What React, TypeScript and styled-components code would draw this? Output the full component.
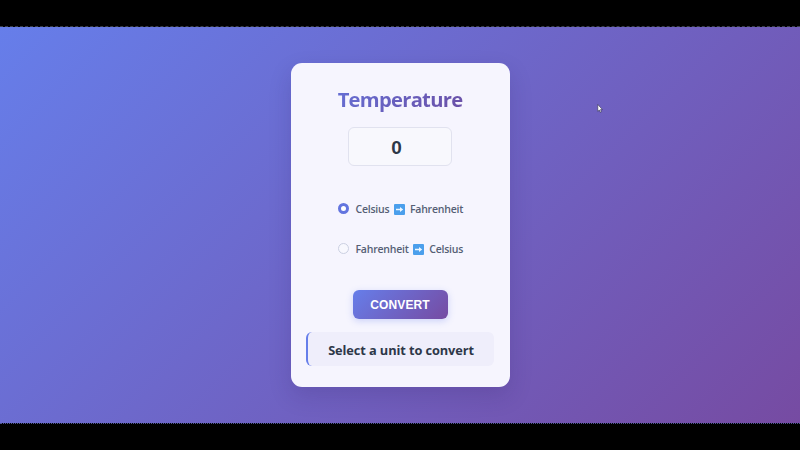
import React, { useState } from "react";
import styled, { createGlobalStyle } from "styled-components";

const GlobalStyle = createGlobalStyle`
  * { box-sizing: border-box; }
  body { margin: 0; background: #000; overflow: hidden; }
`;

const Frame = styled.div`
  position: relative;
  height: 450px;
  padding: 26px 0;
  background: #000;
  font-family: "Open Sans", "Noto Sans", sans-serif;
`;

const Stage = styled.main`
  height: 398px;
  display: flex;
  justify-content: center;
  align-items: center;
  border-top: 1px dashed #3c404c;
  border-bottom: 1px dotted #4e5794;
  background: linear-gradient(135deg, #667eea 0%, #764ba2 100%) padding-box;
  padding-left: 1px;
`;

const Card = styled.form`
  width: 219px;
  height: 324px;
  display: flex;
  flex-direction: column;
  align-items: center;
  padding: 22px 16px 0 15px;
  border-radius: 11px;
  background: #f6f5fe;
  box-shadow: 0 9px 22px rgba(40, 25, 90, 0.17);
`;

const Title = styled.h1`
  margin: 0;
  width: 188px;
  height: 29px;
  font-size: 20.2px;
  line-height: 28px;
  font-weight: 700;
  letter-spacing: -0.72px;
  text-align: center;
  white-space: nowrap;
  color: transparent;
  background: linear-gradient(135deg, #6476df, #6c489b);
  background-clip: text;
`;

const NumberField = styled.input`
  display: block;
  width: 104px;
  height: 39px;
  margin: 13px 0 0;
  padding: 2px 7px 0 0;
  border: 1px solid #e1e2ef;
  border-radius: 6px;
  outline: none;
  background: #f8f8fd;
  color: #2d3748;
  font: 700 19px "Liberation Sans", Arial, sans-serif;
  text-align: center;
`;

const Options = styled.div`
  width: 124px;
  margin-top: 33px;
  display: flex;
  flex-direction: column;
  gap: 20px;
`;

const Option = styled.label`
  height: 20px;
  display: flex;
  align-items: center;
  white-space: nowrap;
  font-size: 10.5px;
  line-height: 20px;
  font-weight: 600;
  letter-spacing: -0.22px;
  color: #555f75;
`;

const Radio = styled.input`
  appearance: none;
  flex: none;
  width: 11px;
  height: 11px;
  margin: 0 6.5px 1px 0;
  border: 1px solid #cbd0e2;
  border-radius: 50%;
  background: #f8f8fe;
  &:checked {
    border: 3.5px solid #6375df;
    background: #fff;
  }
`;

const Arrow = styled.svg`
  flex: none;
  width: 11px;
  height: 11px;
  margin: 0 5px 0 4.5px;
`;

const ConvertButton = styled.button`
  width: 95px;
  height: 29px;
  flex: none;
  margin-top: 31px;
  padding: 0;
  border: 0;
  border-radius: 6px;
  background: linear-gradient(135deg, #667eea, #764ba2);
  box-shadow: 0 2px 7px rgba(102, 126, 234, 0.3);
  color: #fff;
  font: 700 12px "Liberation Sans", Arial, sans-serif;
  letter-spacing: 0.1px;
`;

const Result = styled.output`
  width: 188px;
  height: 34px;
  margin-top: 13px;
  border-left: 2px solid #667eea;
  border-radius: 6px;
  background: #efeefb;
  color: #2d3748;
  font-size: 12.8px;
  line-height: 36px;
  font-weight: 700;
  letter-spacing: -0.1px;
  text-align: center;
  white-space: nowrap;
`;

const Pointer = styled.svg`
  position: absolute;
  left: 597px;
  top: 104px;
  width: 6px;
  height: 9px;
`;

const ArrowTile = () => (
  <Arrow viewBox="0 0 11 11">
    <rect width="11" height="11" rx="1" fill="#4b9fec" />
    <path d="M2 4.8H6V3L9.2 5.5 6 8V6.2H2Z" fill="#eef8ff" />
  </Arrow>
);

const conversions = [
  { from: "Celsius", to: "Fahrenheit" },
  { from: "Fahrenheit", to: "Celsius" },
];

export default function App() {
  const [value, setValue] = useState("0");
  const [unit, setUnit] = useState(0);
  const [result, setResult] = useState("Select a unit to convert");

  const convert = (event: React.FormEvent) => {
    event.preventDefault();
    const degrees = Number(value);
    setResult(
      unit === 0
        ? `${((degrees * 9) / 5 + 32).toFixed(1)}°F`
        : `${(((degrees - 32) * 5) / 9).toFixed(1)}°C`
    );
  };

  return (
    <Frame>
      <GlobalStyle />
      <Stage>
        <Card onSubmit={convert}>
          <Title>Temperature</Title>
          <NumberField value={value} onChange={(e) => setValue(e.target.value)} />
          <Options>
            {conversions.map(({ from, to }, index) => (
              <Option key={from}>
                <Radio type="radio" name="unit" checked={unit === index} onChange={() => setUnit(index)} />
                {from}
                <ArrowTile />
                {to}
              </Option>
            ))}
          </Options>
          <ConvertButton type="submit">CONVERT</ConvertButton>
          <Result>{result}</Result>
        </Card>
      </Stage>
      <Pointer viewBox="0 0 6 9">
        <path d="M.8.5V7.3L2.3 6 3.3 8.3 4.4 7.8 3.5 5.6H5.4Z" fill="#fff" stroke="#33334a" strokeWidth=".6" />
      </Pointer>
    </Frame>
  );
}
